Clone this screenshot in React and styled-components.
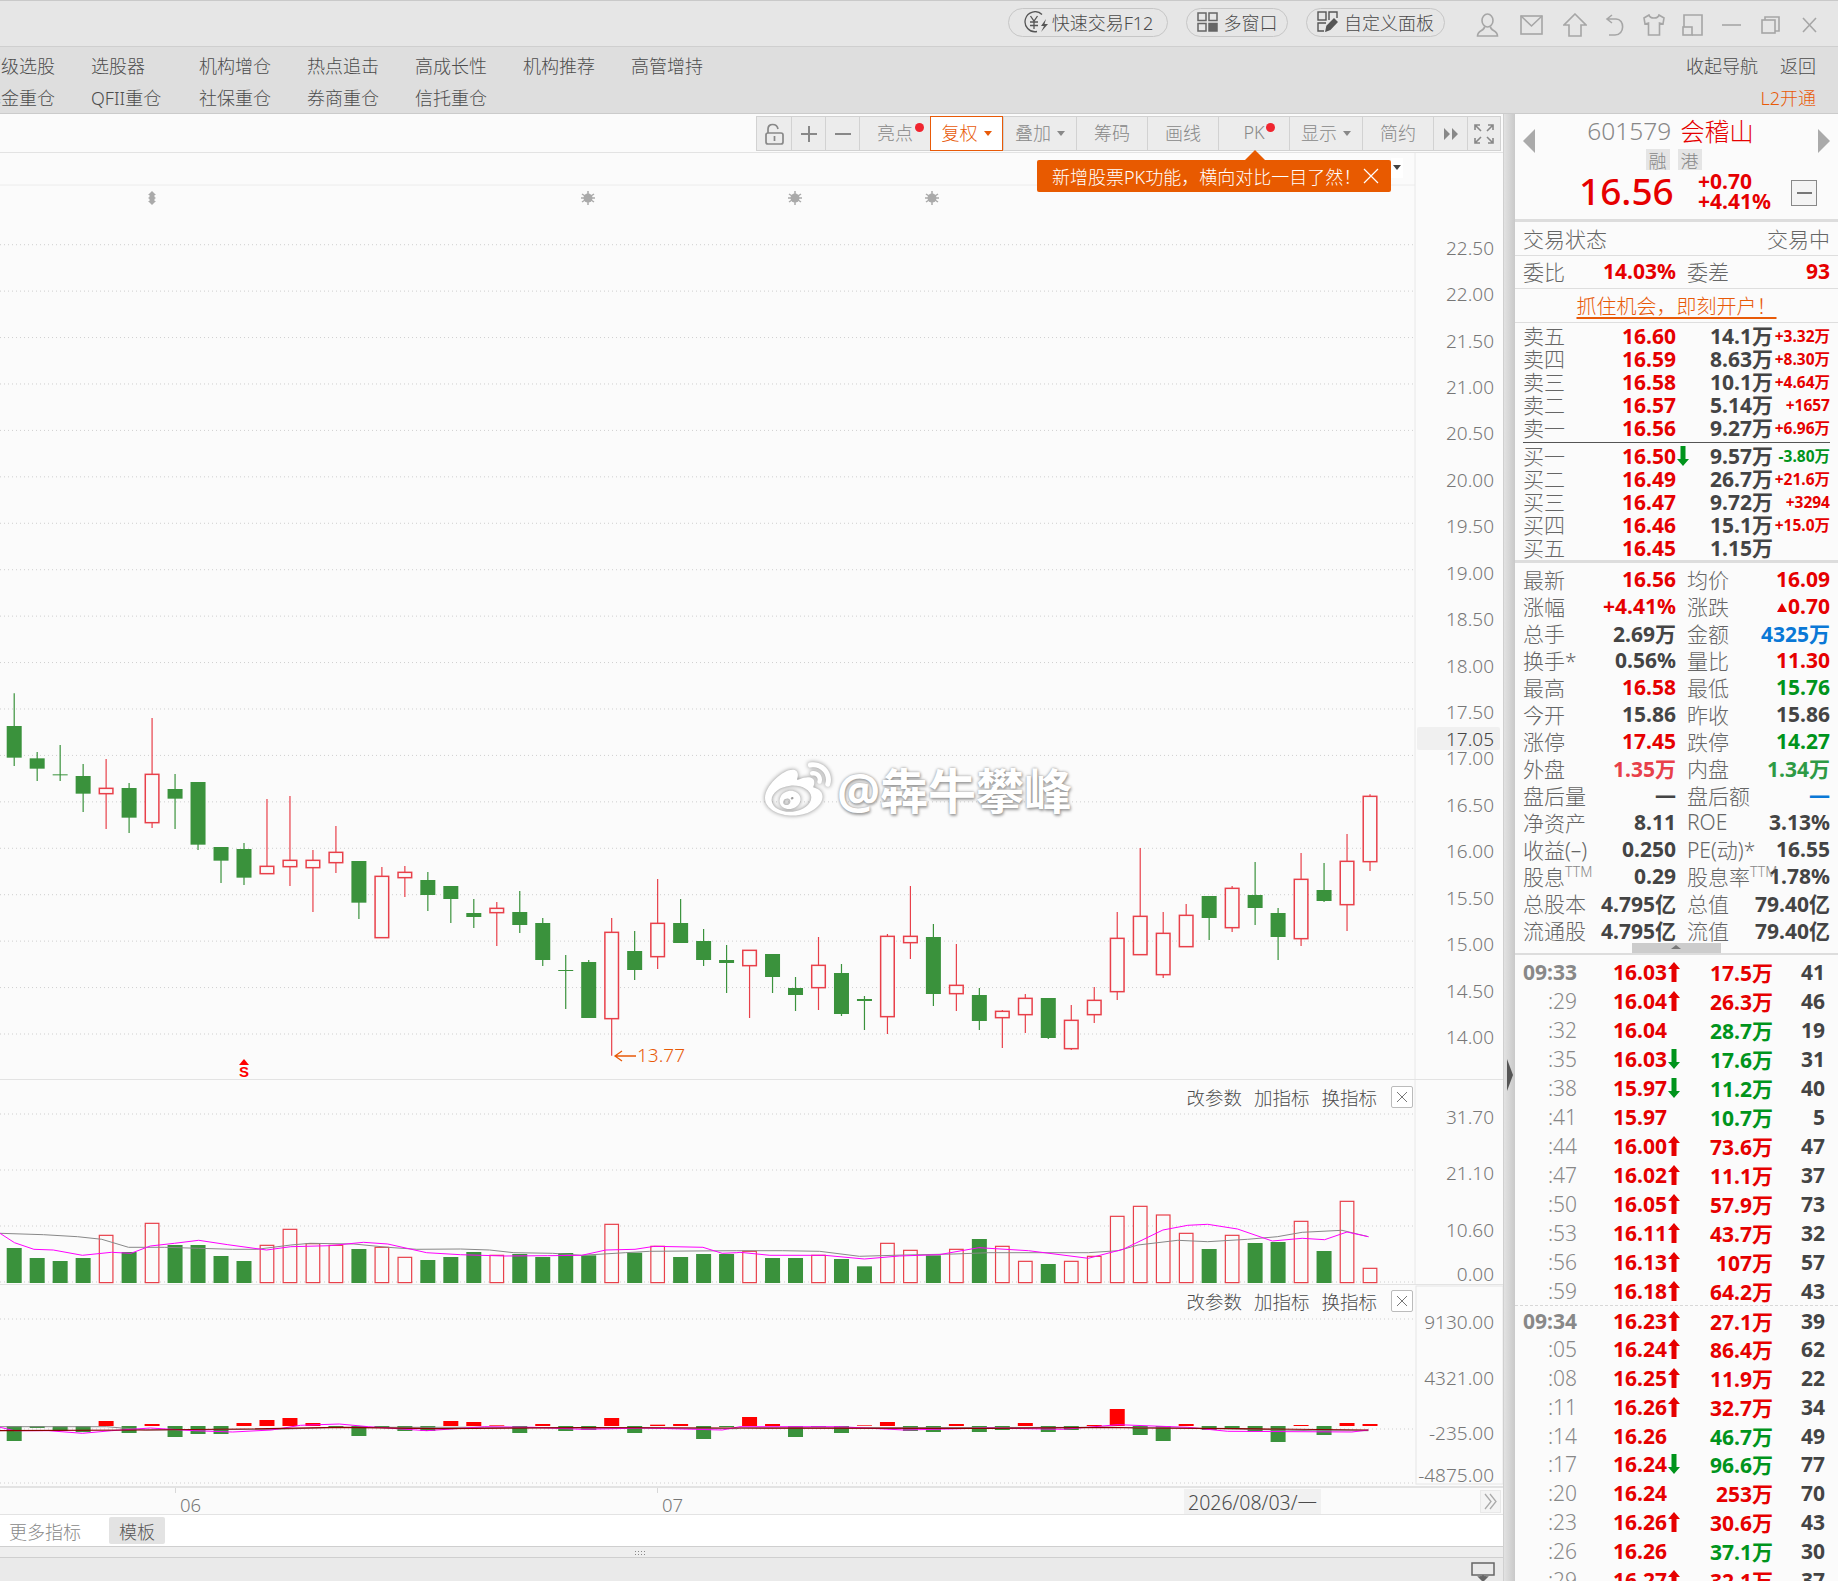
import React from "react";
import styled, { createGlobalStyle } from "styled-components";
import { FaWeibo } from "react-icons/fa";

const FONT = `"Noto Sans", "Noto Sans CJK SC", sans-serif`;
const RED = "#e60000";
const GREEN = "#00941c";
const BLUE = "#0a78d6";
const ORANGE = "#e85a08";
const DARK = "#444";
const CANDLE_RED = "#e8404a";
const CANDLE_GREEN = "#3a923c";

const GlobalStyle = createGlobalStyle`
  html, body { margin: 0; padding: 0; background: #fbfbfb; }
  * { box-sizing: border-box; }
`;

const Page = styled.div`
  width: 1838px;
  height: 1581px;
  overflow: hidden;
  font-family: ${FONT};
  background: #fbfbfb;
  display: flex;
  flex-direction: column;
`;

/* top bars */
const TopBar = styled.div`
  height: 47px;
  flex: none;
  background: #e6e6e6;
  border-top: 1px solid #c9c9c9;
  border-bottom: 1px solid #cfcfcf;
  display: flex;
  align-items: center;
  justify-content: flex-end;
  padding: 0 21px 2px 0;
`;

const Pill = styled.div`
  width: ${(p) => p.$w}px;
  height: 29px;
  margin-right: ${(p) => p.$mr}px;
  padding-bottom: 2px;
  border: 1px solid #c6c6c6;
  border-radius: 15px;
  display: flex;
  align-items: center;
  justify-content: center;
  gap: ${(p) => p.$gap || 6}px;
  color: #4a4a4a;
  font-size: 18px;
  font-weight: 300;
  white-space: nowrap;
`;

const TopIcon = styled.svg`
  display: block;
  flex: none;
  margin-left: ${(p) => p.$ml}px;
  margin-top: 4px;
  fill: none;
  stroke: #a6a6a6;
  stroke-width: 1.6;
`;

const MenuBar = styled.div`
  height: 67px;
  flex: none;
  background: #dedede;
  border-bottom: 1px solid #cbcbcb;
  display: flex;
  justify-content: space-between;
  overflow: hidden;
  padding-top: 2px;
`;

const MenuGrid = styled.div`
  margin-left: -17px;
  display: grid;
  grid-template-columns: repeat(7, 108px);
  grid-auto-rows: 32px;
  align-items: center;
  font-size: 18px;
  font-weight: 300;
  color: #4c4c4c;
`;

const MenuRight = styled.div`
  display: grid;
  grid-auto-rows: 32px;
  align-items: center;
  justify-items: end;
  padding-right: 22px;
  font-size: 18px;
  font-weight: 300;
  color: #4c4c4c;
`;

const MenuLinks = styled.div`
  display: flex;
  gap: 22px;
`;

const OpenLink = styled.div`
  color: ${ORANGE};
`;

/* main area */
const Main = styled.div`
  flex: 1;
  min-height: 0;
  display: flex;
`;

const ChartColumn = styled.div`
  width: 1503px;
  flex: none;
  position: relative;
  display: flex;
  flex-direction: column;
`;

const Splitter = styled.div`
  width: 12px;
  flex: none;
  position: relative;
  background: linear-gradient(90deg, #e2e2e2, #c9c9c9);
  border-left: 1px solid #d0d0d0;
`;

const SplitterArrow = styled.div`
  position: absolute;
  left: 3px;
  top: 945px;
  width: 0;
  height: 0;
  border-top: 16px solid transparent;
  border-bottom: 16px solid transparent;
  border-left: 6px solid #555;
`;

const ToolbarRow = styled.div`
  height: 39px;
  flex: none;
  border-bottom: 1px solid #e3e3e3;
  display: flex;
  justify-content: flex-end;
  padding: 2px 2px 0 0;
`;

const Toolbar = styled.div`
  height: 35px;
  display: flex;
  border: 1px solid #d2d2d2;
  background: #ececec;
`;

const ToolButton = styled.div`
  position: relative;
  width: ${(p) => p.$w}px;
  margin: ${(p) => (p.$active ? "-1px 0" : "0")};
  padding-bottom: ${(p) => (p.$icon ? 0 : 3)}px;
  border-left: ${(p) => (p.$first ? "none" : "1.5px solid #d2d2d2")};
  display: flex;
  align-items: center;
  justify-content: center;
  gap: 6px;
  font-size: 18px;
  font-weight: 300;
  color: #888;
  ${(p) =>
    p.$active &&
    `border: 1px solid ${ORANGE}; background: #fff; color: ${ORANGE}; z-index: 1;`}
`;

const RedDot = styled.span`
  position: absolute;
  top: 6px;
  right: ${(p) => p.$right}px;
  width: 9px;
  height: 9px;
  border-radius: 50%;
  background: #f0252f;
`;

const Caret = styled.span`
  width: 0;
  height: 0;
  margin-top: 3px;
  border-left: 4px solid transparent;
  border-right: 4px solid transparent;
  border-top: 5px solid ${(p) => p.$color || "#888"};
`;

const ToolIcon = styled.svg`
  display: block;
  fill: none;
  stroke: #888;
  stroke-width: ${(p) => p.$sw || 1.6};
`;

const Tip = styled.div`
  position: absolute;
  left: 1037px;
  top: 46px;
  width: 354px;
  height: 32px;
  z-index: 3;
  background: #e85a00;
  border-radius: 2px;
  color: #fff;
  font-size: 18px;
  font-weight: 300;
  display: flex;
  align-items: center;
  gap: 2px;
  padding-left: 15px;
  white-space: nowrap;

  &::before {
    content: "";
    position: absolute;
    left: 208px;
    top: -10px;
    border-left: 10px solid transparent;
    border-right: 10px solid transparent;
    border-bottom: 10px solid #e85a00;
  }
`;

const ChartPanel = styled.div`
  height: ${(p) => p.$h}px;
  flex: none;
  position: relative;
  border-bottom: 1px solid #e3e3e3;
`;

const ChartSvg = styled.svg`
  display: block;
`;

const AxisText = styled.text`
  font-family: ${FONT};
  font-size: 19px;
  font-weight: 300;
  fill: ${(p) => p.$color || "#777"};
  text-anchor: ${(p) => p.$anchor || "end"};
`;

const PanelTools = styled.div`
  position: absolute;
  right: 90px;
  top: ${(p) => p.$top}px;
  display: flex;
  align-items: center;
  gap: 12px;
  font-size: 18.5px;
  font-weight: 300;
  color: #4c4c4c;
  height: 22px;
`;

const CloseBox = styled.div`
  width: 22px;
  height: 22px;
  border: 1px solid #bbb;
  border-radius: 2px;
  background: #fff;
  display: flex;
  align-items: center;
  justify-content: center;
  margin-left: 2px;
`;

const Watermark = styled.div`
  position: absolute;
  left: 765px;
  top: 605px;
  display: flex;
  align-items: center;
  gap: 6px;
  color: #fff;
  font-size: 48px;
  font-weight: 700;
  line-height: 56px;
  white-space: nowrap;
  text-shadow: 0 0 3px #8a8a8a, 1px 2px 3px #aaa;

  svg {
    filter: drop-shadow(0 0 2px #888);
  }
`;

const DateBar = styled.div`
  height: 28px;
  flex: none;
  position: relative;
  border-top: 1px solid #e3e3e3;
  border-bottom: 1px solid #e3e3e3;
  font-size: 18.5px;
  font-weight: 300;
  color: #777;
`;

const MonthTick = styled.div`
  position: absolute;
  left: ${(p) => p.$x}px;
  top: 0;
  height: 26px;
  line-height: 34px;
  padding-left: 5px;
  white-space: nowrap;

  &::before {
    content: "";
    position: absolute;
    left: 0;
    top: 0;
    height: 5px;
    border-left: 1px solid #d8d8d8;
  }
`;

const DateTag = styled.div`
  position: absolute;
  left: 1184px;
  top: 1px;
  width: 137px;
  height: 25px;
  background: #f1f1f1;
  color: #4a4a4a;
  font-size: 19.5px;
  display: flex;
  align-items: center;
  justify-content: center;
  white-space: nowrap;
`;

const MoreButton = styled.div`
  position: absolute;
  left: 1480px;
  top: 2px;
  width: 21px;
  height: 23px;
  background: #f4f4f4;
  border: 1px solid #e8e8e8;
  display: flex;
  align-items: center;
  justify-content: center;
`;

const TemplateBar = styled.div`
  height: 32px;
  flex: none;
  background: #fff;
  border-bottom: 1px solid #cfcfcf;
  display: flex;
  align-items: center;
  padding-left: 9px;
  font-size: 18px;
  font-weight: 300;
  color: #888;
`;

const TemplateTag = styled.div`
  margin-left: 28px;
  width: 56px;
  height: 27px;
  background: #e3e3e3;
  border-radius: 2px;
  color: #555;
  display: flex;
  align-items: center;
  justify-content: center;
`;

const Strip = styled.div`
  height: 11px;
  flex: none;
  background: #eeeeee;
  border-bottom: 1px solid #cfcfcf;
  display: flex;
  justify-content: center;
  padding: 3px 222px 0 0;
`;

const Grip = styled.div`
  width: 13px;
  height: 6px;
  background-image: radial-gradient(#888 0.9px, transparent 1px);
  background-size: 3px 3px;
`;

const StatusBar = styled.div`
  flex: 1;
  background: #eaeaea;
  display: flex;
  justify-content: flex-end;
  padding: 4px 8px 0 0;
`;

/* quote panel */
const QuotePanel = styled.div`
  width: 323px;
  flex: none;
  background: #fbfbfb;
  overflow: hidden;
  color: #666;
  font-size: 21px;
`;

const PanelHead = styled.div`
  height: 108px;
  border-bottom: 3px solid #dddddd;
`;

const NavRow = styled.div`
  height: 35px;
  display: flex;
  justify-content: space-between;
  padding: 0 8px;
`;

const NavArrow = styled.div`
  width: 0;
  height: 0;
  margin-top: 15px;
  border-top: 12px solid transparent;
  border-bottom: 12px solid transparent;
  ${(p) =>
    p.$right ? "border-left: 12px solid #aaa;" : "border-right: 12px solid #aaa;"}
`;

const Title = styled.div`
  margin-right: 12px;
  padding-bottom: 2px;
  display: flex;
  align-items: center;
  gap: 9px;
  font-size: 24.5px;
  font-weight: 300;
  color: #888;
  white-space: nowrap;
`;

const TitleName = styled.span`
  color: ${RED};
`;

const BadgeRow = styled.div`
  height: 22px;
  display: flex;
  justify-content: center;
  gap: 8px;
  padding-right: 6px;
`;

const Badge = styled.div`
  width: 24px;
  height: 21px;
  background: #e5e5e5;
  color: #888;
  font-size: 18px;
  font-weight: 300;
  display: flex;
  align-items: center;
  justify-content: center;
`;

const QuoteRow = styled.div`
  display: flex;
  padding-left: 64px;
`;

const BigPrice = styled.div`
  width: 119px;
  line-height: 40px;
  font-size: 37px;
  font-weight: 500;
  color: ${RED};
`;

const ChangeBox = styled.div`
  margin-top: 0;
  font-size: 21px;
  font-weight: 700;
  line-height: 20px;
  color: ${RED};
`;

const MinusBox = styled.div`
  margin: 9px 21px 0 auto;
  width: 26px;
  height: 26px;
  border: 1.5px solid #888;
  background: #f4f4f4;
  display: flex;
  align-items: center;
  justify-content: center;
  &::after {
    content: "";
    width: 15px;
    height: 2px;
    background: #777;
  }
`;

const Line = styled.div`
  height: ${(p) => p.$h}px;
  border-bottom: 1px solid #dedede;
  display: flex;
  align-items: center;
  justify-content: ${(p) => p.$justify || "space-between"};
  padding: 0 8px ${(p) => p.$pb ?? 2}px;
  font-weight: 300;
`;

const CommitCell = styled.div`
  display: grid;
  width: 100%;
  grid-template-columns: 60px 93px 11px 60px 1fr;
  align-items: center;
`;

const Val = styled.span`
  font-weight: 700;
  text-align: right;
  white-space: nowrap;
  color: ${(p) => p.$color || DARK};
`;

const Promo = styled.span`
  color: ${ORANGE};
  font-size: 20px;
  text-decoration: underline;
  text-underline-offset: 3px;
`;

const OrderBook = styled.div`
  padding-top: 1.5px;
`;

const OrderRow = styled.div`
  height: 23px;
  margin: 0 8px;
  display: grid;
  grid-template-columns: 60px 93px 13px 84px 57px;
  align-items: center;
  line-height: 23px;
`;

const Thin = styled.span`
  font-weight: 300;
  white-space: nowrap;
`;

const Delta = styled.span`
  font-size: 15.5px;
  font-weight: 700;
  text-align: right;
  white-space: nowrap;
  color: ${(p) => p.$color};
`;

const BookDivider = styled.div`
  height: 3px;
  margin: 0 8px 2px;
  border-bottom: 1px solid #555;
`;

const StatsBlock = styled.div`
  height: 383.5px;
  border-top: 3px solid #dddddd;
  padding-top: 1.5px;
`;

const StatRow = styled.div`
  height: 27px;
  margin: 0 8px;
  display: grid;
  grid-template-columns: 60px 93px 11px 60px 1fr;
  align-items: center;
`;

const Sup = styled.sup`
  font-size: 14px;
  line-height: 0;
  color: #888;
`;

const UpMark = styled.span`
  display: inline-block;
  width: 0;
  height: 0;
  margin-right: 1px;
  vertical-align: 2px;
  border-left: 5px solid transparent;
  border-right: 5px solid transparent;
  border-bottom: 9px solid ${RED};
`;

const Handle = styled.div`
  position: relative;
  width: 89px;
  height: 10px;
  margin: 0 auto;
  background: #cccccc;
  &::after {
    content: "";
    position: absolute;
    left: 39px;
    top: 2px;
    border-left: 5px solid transparent;
    border-right: 5px solid transparent;
    border-bottom: 4px solid #777;
  }
`;

const TickList = styled.div`
  border-top: 2px solid #dddddd;
  padding-top: 2px;
`;

const TickRow = styled.div`
  height: 28.97px;
  margin-left: ${(p) => (p.$dash ? 0 : 8)}px;
  padding-left: ${(p) => (p.$dash ? 8 : 0)}px;
  border-top: ${(p) => (p.$dash ? "1px dashed #d8d8d8" : "none")};
  display: grid;
  grid-template-columns: 54px 90px 13px 93px 52px;
  align-items: center;
`;

const TickTime = styled.span`
  text-align: ${(p) => (p.$head ? "left" : "right")};
  font-weight: ${(p) => (p.$head ? 700 : 300)};
  color: #888;
`;

const ArrowSvg = styled.svg`
  display: block;
  justify-self: end;
`;

const Arrow = ({ dir }) => (
  <ArrowSvg width="12" height="20" viewBox="0 0 12 20" fill={dir === "up" ? RED : GREEN}>
    {dir === "up" ? (
      <path d="M6 0 L12 7 H8.5 V20 H3.5 V7 H0 Z" />
    ) : (
      <path d="M3.5 0 H8.5 V13 H12 L6 20 L0 13 H3.5 Z" />
    )}
  </ArrowSvg>
);

/* chart data: values are taken in 3x crop rows, y = 680 + v / 3 */
const CANDLES = [
  [40, 138, 233, 258, "g"], [216, 235, 266, 303, "g"], [195, 283, 285, 303, "g"], [252, 288, 341, 396, "g"],
  [237, 325, 341, 447, "r"], [309, 324, 413, 459, "g"], [114, 283, 428, 444, "r"], [282, 327, 356, 447, "g"],
  [306, 306, 494, 510, "g"], [501, 501, 542, 609, "g"], [489, 507, 593, 615, "g"], [357, 559, 581, 581, "r"],
  [348, 541, 560, 618, "r"], [510, 541, 563, 696, "r"], [438, 517, 548, 579, "r"], [543, 543, 668, 717, "g"],
  [561, 589, 773, 773, "r"], [558, 577, 593, 651, "r"], [576, 600, 645, 693, "g"], [618, 618, 657, 729, "g"],
  [657, 699, 711, 744, "g"], [666, 685, 698, 798, "r"], [633, 696, 735, 759, "g"], [714, 729, 840, 858, "g"],
  [825, 870, 873, 987, "g"], [840, 846, 1014, 1014, "g"], [714, 757, 1016, 1127, "r"], [753, 813, 870, 900, "g"],
  [597, 730, 830, 867, "r"], [657, 729, 789, 789, "g"], [747, 783, 840, 858, "g"], [795, 840, 849, 939, "g"],
  [811, 811, 857, 1014, "r"], [822, 822, 891, 939, "g"], [891, 924, 945, 993, "g"], [771, 856, 923, 990, "r"],
  [852, 879, 1002, 1008, "g"], [948, 957, 963, 1050, "g"], [762, 769, 1010, 1062, "r"], [618, 769, 788, 837, "r"],
  [732, 771, 942, 978, "g"], [792, 916, 941, 993, "r"], [924, 945, 1023, 1050, "g"], [990, 994, 1013, 1104, "r"],
  [942, 955, 1004, 1059, "r"], [954, 954, 1074, 1077, "g"], [975, 1021, 1106, 1110, "r"], [921, 961, 1004, 1029, "r"],
  [696, 775, 935, 960, "r"], [504, 709, 824, 824, "r"], [696, 760, 884, 894, "r"], [672, 706, 800, 800, "r"],
  [648, 648, 714, 780, "g"], [618, 625, 743, 756, "r"], [546, 645, 684, 735, "g"], [684, 699, 771, 840, "g"],
  [519, 598, 776, 798, "r"], [549, 630, 663, 666, "g"], [462, 544, 674, 753, "r"], [343, 349, 545, 573, "r"],
];

const VOLUME = [
  504, 534, 543, 534, 466, 516, 430, 495, 495, 528, 543, 496, 448, 491, 496, 507, 502, 532, 540, 531,
  516, 526, 522, 531, 519, 526, 433, 518, 499, 531, 522, 522, 514, 534, 534, 526, 537, 559, 490, 511,
  526, 508, 477, 499, 544, 552, 544, 529, 409, 379, 405, 460, 507, 466, 489, 486, 424, 513, 364, 565,
];

const MACD = [
  1083, 1044, 1053, 1056, 1023, 1059, 1032, 1071, 1062, 1062, 1029, 1020, 1014, 1029, 1044, 1068, 1044, 1053, 1053, 1023,
  1026, 1036, 1059, 1032, 1053, 1050, 1014, 1059, 1034, 1032, 1077, 1041, 1011, 1032, 1071, 1041, 1059, 1036, 1026, 1053,
  1056, 1032, 1056, 1050, 1029, 1056, 1050, 1035, 987, 1065, 1083, 1032, 1050, 1044, 1056, 1086, 1035, 1065, 1029, 1032,
];

const VOL_GRAY = [
  [0, 460], [90, 464], [160, 470], [210, 478], [265, 502], [340, 502], [410, 505], [480, 508], [530, 508], [600, 495],
  [640, 490], [730, 492], [800, 502], [860, 508], [950, 507], [1010, 510], [1060, 518], [1140, 520], [1200, 526],
  [1290, 518], [1340, 514], [1520, 512],
];
const VOL_GRAY2 = [
  [0, 512], [85, 512], [160, 514], [240, 529], [330, 525], [430, 522], [500, 518], [700, 518], [760, 512], [800, 495],
  [880, 481], [940, 485], [1020, 478], [1080, 470], [1130, 457], [1210, 451], [1263, 470],
];
const VOL_PINK = [
  [0, 460], [30, 488], [70, 508], [110, 510], [170, 526], [230, 517], [270, 520], [310, 498], [360, 490], [410, 481],
  [470, 494], [550, 510], [600, 500], [680, 497], [750, 487], [800, 492], [880, 518], [950, 524], [1040, 528],
  [1130, 527], [1200, 526], [1250, 510], [1310, 508], [1350, 499], [1450, 502], [1490, 520], [1520, 518],
];
const VOL_PINK2 = [
  [0, 517], [60, 526], [170, 526], [250, 537], [320, 528], [400, 524], [480, 503], [580, 512], [700, 535], [770, 508],
  [850, 450], [900, 436], [940, 433], [1000, 447], [1070, 483], [1130, 475], [1175, 479], [1220, 456], [1263, 470],
];
const MACD_RED = [[0, 1052], [300, 1050], [500, 1047], [700, 1042], [900, 1046], [1200, 1043], [1520, 1044]];
const MACD_RED2 = [[0, 1044], [500, 1045], [740, 1042], [800, 1044], [1000, 1046], [1263, 1050]];
const MACD_PINK = [
  [0, 1042], [30, 1052], [100, 1052], [170, 1060], [230, 1052], [310, 1044], [400, 1052], [480, 1056], [560, 1050],
  [620, 1036], [700, 1032], [760, 1040], [880, 1052], [1000, 1040], [1100, 1042], [1200, 1048], [1330, 1044], [1490, 1050],
];
const MACD_PINK2 = [
  [0, 1040], [80, 1040], [200, 1040], [330, 1050], [500, 1044], [650, 1048], [760, 1034], [900, 1042], [980, 1054],
  [1230, 1056], [1263, 1050],
];
const MACD_GRAY = [[0, 1040], [220, 1040], [300, 1050], [570, 1048], [700, 1042], [1000, 1042], [1520, 1046]];
const MACD_GRAY2 = [[0, 1044], [730, 1042], [900, 1044], [1150, 1052], [1263, 1052]];

const cx = (i) => 14.2 + 22.98 * i;
const mainY = (v) => 680 + v / 3;
const lowerY = (v) => 1080 + v / 3;
const priceY = (p) => 1034 - (p - 14) * 92.86;

const joinLine = (a, b) =>
  [...a.map(([x, v]) => [x / 2.063, v]), ...b.map(([x, v]) => [740 + x / 2.01, v])]
    .map(([x, v]) => `${x.toFixed(1)},${lowerY(v).toFixed(1)}`)
    .join(" ");

const PRICES = Array.from({ length: 18 }, (_, i) => 14 + i * 0.5);

const MenuRow1 = ["高级选股", "选股器", "机构增仓", "热点追击", "高成长性", "机构推荐", "高管增持"];
const MenuRow2 = ["基金重仓", "QFII重仓", "社保重仓", "券商重仓", "信托重仓"];

const Candle = ({ c, i }) => {
  const [hi, top, bot, lo, col] = c;
  const x = cx(i);
  const color = col === "r" ? CANDLE_RED : CANDLE_GREEN;
  return (
    <g>
      <line x1={x} x2={x} y1={mainY(hi)} y2={mainY(lo)} stroke={color} strokeWidth="1.2" />
      {col === "r" ? (
        <rect x={x - 6.8} width="13.6" y={mainY(top)} height={(bot - top) / 3} fill="#fbfbfb" stroke={color} strokeWidth="1.5" />
      ) : (
        <rect x={x - 7.5} width="15" y={mainY(top)} height={Math.max((bot - top) / 3, 1)} fill={color} />
      )}
    </g>
  );
};

const GridLines = ({ ys }) =>
  ys.map((y) => (
    <line key={y} x1="0" x2="1415" y1={y} y2={y} stroke="#cfcfcf" strokeDasharray="1 3" />
  ));

const Mark = ({ x, tall }) => (
  <g stroke="#aaa" fill="#aaa">
    {tall ? (
      <path d={`M${x} 191 l-4 4 h1.5 v2 l-1.5 1 l1.5 1 v2 h-1.5 l4 4 l4 -4 h-1.5 v-2 l1.5 -1 l-1.5 -1 v-2 h1.5 Z`} stroke="none" />
    ) : (
      <>
        <circle cx={x} cy="198" r="4.5" stroke="none" />
        <path d={`M${x} 191 V205 M${x - 6} 194 L${x + 6} 202 M${x + 6} 194 L${x - 6} 202 M${x - 7} 198 H${x + 7}`} strokeWidth="1.5" />
      </>
    )}
  </g>
);

const PanelToolset = ({ top }) => (
  <PanelTools $top={top}>
    <span>改参数</span>
    <span>加指标</span>
    <span>换指标</span>
    <CloseBox>
      <svg width="12" height="12" viewBox="0 0 12 12" stroke="#777" fill="none">
        <path d="M1 1 L11 11 M11 1 L1 11" />
      </svg>
    </CloseBox>
  </PanelTools>
);

const ASKS = [
  ["卖五", "16.60", "14.1", "+3.32万"],
  ["卖四", "16.59", "8.63", "+8.30万"],
  ["卖三", "16.58", "10.1", "+4.64万"],
  ["卖二", "16.57", "5.14", "+1657"],
  ["卖一", "16.56", "9.27", "+6.96万"],
];
const BIDS = [
  ["买一", "16.50", "9.57", "-3.80万", "dn"],
  ["买二", "16.49", "26.7", "+21.6万"],
  ["买三", "16.47", "9.72", "+3294"],
  ["买四", "16.46", "15.1", "+15.0万"],
  ["买五", "16.45", "1.15", ""],
];

const STATS = [
  ["最新", "16.56", RED, "均价", "16.09", RED],
  ["涨幅", "+4.41%", RED, "涨跌", "^0.70", RED],
  ["总手", "2.69万", DARK, "金额", "4325万", BLUE],
  ["换手*", "0.56%", DARK, "量比", "11.30", RED],
  ["最高", "16.58", RED, "最低", "15.76", GREEN],
  ["今开", "15.86", DARK, "昨收", "15.86", DARK],
  ["涨停", "17.45", RED, "跌停", "14.27", GREEN],
  ["外盘", "1.35万", "#e8404a", "内盘", "1.34万", "#2e9a45"],
  ["盘后量", "—", DARK, "盘后额", "—", BLUE],
  ["净资产", "8.11", DARK, "ROE", "3.13%", DARK],
  ["收益(–)", "0.250", DARK, "PE(动)*", "16.55", DARK],
  ["股息|TTM", "0.29", DARK, "股息率|TTM", "1.78%", DARK],
  ["总股本", "4.795亿", DARK, "总值", "79.40亿", DARK],
  ["流通股", "4.795亿", DARK, "流值", "79.40亿", DARK],
];

const TICKS = [
  ["09:33", "16.03", "up", "17.5", "r", 41],
  [":29", "16.04", "up", "26.3", "r", 46],
  [":32", "16.04", "", "28.7", "g", 19],
  [":35", "16.03", "dn", "17.6", "g", 31],
  [":38", "15.97", "dn", "11.2", "g", 40],
  [":41", "15.97", "", "10.7", "g", 5],
  [":44", "16.00", "up", "73.6", "r", 47],
  [":47", "16.02", "up", "11.1", "r", 37],
  [":50", "16.05", "up", "57.9", "r", 73],
  [":53", "16.11", "up", "43.7", "r", 32],
  [":56", "16.13", "up", "107", "r", 57],
  [":59", "16.18", "up", "64.2", "r", 43],
  ["09:34", "16.23", "up", "27.1", "r", 39],
  [":05", "16.24", "up", "86.4", "r", 62],
  [":08", "16.25", "up", "11.9", "r", 22],
  [":11", "16.26", "up", "32.7", "r", 34],
  [":14", "16.26", "", "46.7", "g", 49],
  [":17", "16.24", "dn", "96.6", "g", 77],
  [":20", "16.24", "", "253", "r", 70],
  [":23", "16.26", "up", "30.6", "r", 43],
  [":26", "16.26", "", "37.1", "g", 30],
  [":29", "16.27", "up", "32.1", "r", 37],
];

const Label = ({ text }) => {
  const [name, sup] = text.split("|");
  return (
    <Thin>
      {name}
      {sup && <Sup>{sup}</Sup>}
    </Thin>
  );
};

const StatValue = ({ text, color }) => (
  <Val $color={color}>
    {text.startsWith("^") ? (
      <>
        <UpMark />
        {text.slice(1)}
      </>
    ) : (
      text
    )}
  </Val>
);

const OrderLine = ({ row }) => (
  <OrderRow>
    <Thin>{row[0]}</Thin>
    <Val $color={RED}>{row[1]}</Val>
    <span>{row[4] && <Arrow dir={row[4]} />}</span>
    <Val>{row[2]}万</Val>
    <Delta $color={row[3].startsWith("-") ? GREEN : RED}>{row[3]}</Delta>
  </OrderRow>
);

const App = () => {
  return (
    <Page>
      <GlobalStyle />
      <TopBar>
        <Pill $w={160} $mr={18} $gap={3}>
          <svg width="26" height="22" viewBox="0 0 26 22" fill="none" stroke="#555" strokeWidth="1.3">
            <path d="M19 3.5 A10 10 0 1 0 14 20.5" />
            <path d="M7.5 5 L11 10 L14.5 5 M11 10 V18 M7 11 H15 M7 14.5 H15" />
            <path d="M23 8 L18 15 H21 L18 21 L25 13 H21.5 Z" fill="#555" stroke="none" />
          </svg>
          快速交易F12
        </Pill>
        <Pill $w={102} $mr={18}>
          <svg width="21" height="20" viewBox="0 0 21 20" fill="none" stroke="#666" strokeWidth="1.5">
            <rect x="1" y="1" width="8" height="7.5" />
            <rect x="12" y="1" width="8" height="7.5" />
            <rect x="1" y="11.5" width="8" height="7.5" />
            <rect x="12" y="11.5" width="8" height="7.5" fill="#666" />
          </svg>
          多窗口
        </Pill>
        <Pill $w={139} $mr={31}>
          <svg width="21" height="21" viewBox="0 0 21 21" fill="none" stroke="#555" strokeWidth="1.4">
            <rect x="1" y="1" width="8" height="8" />
            <path d="M12 9 V1 H20 V7" />
            <path d="M9 12 H1 V20 H7" />
            <path d="M9 20 L10 15 L17 8 L20 11 L13 18.5 Z" fill="#555" />
          </svg>
          自定义面板
        </Pill>
        <TopIcon width="23" height="24" viewBox="0 0 23 24">
          <ellipse cx="11.5" cy="7.5" rx="5.5" ry="6.5" />
          <path d="M8.5 13.5 C9 18 1.5 17 1.5 23 H21.5 C21.5 17 14 18 14.5 13.5" />
        </TopIcon>
        <TopIcon $ml={21} width="23" height="20" viewBox="0 0 23 20">
          <rect x="1" y="1" width="21" height="18" />
          <path d="M1 1 L11.5 11 L22 1" />
        </TopIcon>
        <TopIcon $ml={20} width="24" height="24" viewBox="0 0 24 24">
          <path d="M12 1 L23 12 H18 V23 H6 V12 H1 Z" />
        </TopIcon>
        <TopIcon $ml={18} width="19" height="22" viewBox="0 0 19 22">
          <path d="M7 1 L2 5 L7 9 M2 5 H11 C20 5 20 21 10 21 H4" />
        </TopIcon>
        <TopIcon $ml={18} width="24" height="22" viewBox="0 0 24 22">
          <path d="M7 1 L2 4 L3 10 L6.5 9 V21 H17.5 V9 L21 10 L22 4 L17 1 C16 5 8 5 7 1 Z" />
        </TopIcon>
        <TopIcon $ml={16} width="21" height="22" viewBox="0 0 21 22">
          <path d="M2 13 V1 H20 V21 H10" />
          <rect x="1" y="13" width="9" height="8" />
        </TopIcon>
        <TopIcon $ml={19} width="19" height="24" viewBox="0 0 19 24">
          <path d="M0 12 H19" />
        </TopIcon>
        <TopIcon $ml={20} width="20" height="18" viewBox="0 0 20 18">
          <path d="M4 4 V1 H18 V15 H14" />
          <rect x="1" y="4" width="13" height="13" />
        </TopIcon>
        <TopIcon $ml={21} width="15" height="16" viewBox="0 0 15 16">
          <path d="M1 1 L14 15 M14 1 L1 15" />
        </TopIcon>
      </TopBar>

      <MenuBar>
        <MenuGrid>
          {MenuRow1.map((m) => (
            <span key={m}>{m}</span>
          ))}
          {MenuRow2.map((m) => (
            <span key={m}>{m}</span>
          ))}
        </MenuGrid>
        <MenuRight>
          <MenuLinks>
            <span>收起导航</span>
            <span>返回</span>
          </MenuLinks>
          <OpenLink>L2开通</OpenLink>
        </MenuRight>
      </MenuBar>

      <Main>
        <ChartColumn>
          <ToolbarRow>
            <Toolbar>
              <ToolButton $w={34} $first $icon>
                <ToolIcon width="19" height="22" viewBox="0 0 19 22" $sw={1.7}>
                  <path d="M3 10 V6 C3 0 12 0 13 6" />
                  <rect x="1" y="10" width="17" height="11" rx="2" />
                  <path d="M9.5 13 V18" />
                </ToolIcon>
              </ToolButton>
              <ToolButton $w={34} $icon>
                <ToolIcon width="18" height="18" viewBox="0 0 18 18" $sw={2}>
                  <path d="M1 9 H17 M9 1 V17" />
                </ToolIcon>
              </ToolButton>
              <ToolButton $w={34} $icon>
                <ToolIcon width="18" height="18" viewBox="0 0 18 18" $sw={2}>
                  <path d="M1 9 H17" />
                </ToolIcon>
              </ToolButton>
              <ToolButton $w={71}>
                亮点
                <RedDot $right={6} />
              </ToolButton>
              <ToolButton $w={73} $active>
                复权
                <Caret $color={ORANGE} />
              </ToolButton>
              <ToolButton $w={73}>
                叠加
                <Caret />
              </ToolButton>
              <ToolButton $w={71}>筹码</ToolButton>
              <ToolButton $w={71}>画线</ToolButton>
              <ToolButton $w={71}>
                PK
                <RedDot $right={14} />
              </ToolButton>
              <ToolButton $w={73}>
                显示
                <Caret />
              </ToolButton>
              <ToolButton $w={71}>简约</ToolButton>
              <ToolButton $w={34} $icon>
                <svg width="16" height="12" viewBox="0 0 16 12" fill="#888">
                  <path d="M1 0 L7 6 L1 12 Z M9 0 L15 6 L9 12 Z" />
                </svg>
              </ToolButton>
              <ToolButton $w={33} $icon>
                <ToolIcon width="22" height="22" viewBox="0 0 22 22">
                  <path d="M2 7 V2 H7 M2 2 L8 8 M15 2 H20 V7 M20 2 L14 8 M2 15 V20 H7 M2 20 L8 14 M15 20 H20 V15 M20 20 L14 14" />
                </ToolIcon>
              </ToolButton>
            </Toolbar>
          </ToolbarRow>

          <Tip>
            新增股票PK功能，横向对比一目了然！
            <svg width="16" height="16" viewBox="0 0 16 16" stroke="#fff" strokeWidth="1.2" fill="none">
              <path d="M1 1 L15 15 M15 1 L1 15" />
            </svg>
          </Tip>

          <ChartPanel $h={927}>
            <ChartSvg width="1503" height="926" viewBox="0 153 1503 926">
              <line x1="0" x2="1415" y1="185" y2="185" stroke="#ececec" />
              <line x1="1415" x2="1415" y1="153" y2="1079" stroke="#e8e8e8" />
              <rect x="1391" y="158" width="12" height="20" fill="#fff" />
              <path d="M1393 165 H1401 L1397 170 Z" fill="#444" />
              <GridLines ys={PRICES.map(priceY)} />
              {PRICES.map((p) => (
                <AxisText key={p} x="1494" y={priceY(p) + 10}>
                  {p.toFixed(2)}
                </AxisText>
              ))}
              <rect x="1417" y="727" width="83" height="23" rx="2" fill="#f0f0f0" />
              <AxisText x="1494" y="746" $color="#444">17.05</AxisText>
              <Mark x={152} tall />
              <Mark x={588} />
              <Mark x={795} />
              <Mark x={932} />
              {CANDLES.map((c, i) => (
                <Candle key={i} c={c} i={i} />
              ))}
              <path d="M636 1056 H615 M622 1051 L615 1056 L622 1061" stroke={ORANGE} strokeWidth="1.3" fill="none" />
              <AxisText x="637" y="1062" $anchor="start" $color={ORANGE}>13.77</AxisText>
              <path d="M244 1059 L249 1065 H239 Z" fill="#f00" />
              <text x="244" y="1077" textAnchor="middle" fontSize="15" fontWeight="700" fontFamily="Liberation Sans" fill="#f00">
                S
              </text>
            </ChartSvg>
            <Watermark>
              <FaWeibo size={66} />
              <span>@犇牛攀峰</span>
            </Watermark>
          </ChartPanel>

          <ChartPanel $h={205}>
            <ChartSvg width="1503" height="204" viewBox="0 1080 1503 204">
              <line x1="1415" x2="1415" y1="1080" y2="1284" stroke="#e8e8e8" />
              <GridLines ys={[1114, 1170, 1226, 1282]} />
              {VOLUME.map((v, i) =>
                CANDLES[i][4] === "r" ? (
                  <rect key={i} x={cx(i) - 6.8} width="13.6" y={lowerY(v)} height={1282.6 - lowerY(v)} fill="#fbfbfb" stroke={CANDLE_RED} strokeWidth="1.2" />
                ) : (
                  <rect key={i} x={cx(i) - 7.5} width="15" y={lowerY(v)} height={1283 - lowerY(v)} fill={CANDLE_GREEN} />
                )
              )}
              <polyline points={joinLine(VOL_GRAY, VOL_GRAY2)} fill="none" stroke="#888" strokeWidth="1" />
              <polyline points={joinLine(VOL_PINK, VOL_PINK2)} fill="none" stroke="#ff00ff" strokeWidth="1" />
              <AxisText x="1494" y="1124">31.70</AxisText>
              <AxisText x="1494" y="1180">21.10</AxisText>
              <AxisText x="1494" y="1237">10.60</AxisText>
              <AxisText x="1494" y="1281">0.00</AxisText>
            </ChartSvg>
            <PanelToolset top={6} />
          </ChartPanel>

          <ChartPanel $h={202}>
            <ChartSvg width="1503" height="201" viewBox="0 1285 1503 201">
              <rect x="1416" y="1286" width="87" height="198" fill="none" stroke="#e6e6e6" />
              <GridLines ys={[1319, 1375, 1429, 1483]} />
              {MACD.map((v, i) => {
                const y = lowerY(v);
                const base = 1426;
                return (
                  <rect
                    key={i}
                    x={cx(i) - 7.5}
                    width="15"
                    y={Math.min(y, base)}
                    height={Math.abs(y - base)}
                    fill={v < 1038 ? "#ff0000" : CANDLE_GREEN}
                  />
                );
              })}
              <polyline points={joinLine(MACD_GRAY, MACD_GRAY2)} fill="none" stroke="#888" strokeWidth="1" />
              <polyline points={joinLine(MACD_PINK, MACD_PINK2)} fill="none" stroke="#ff00ff" strokeWidth="1" />
              <polyline points={joinLine(MACD_RED, MACD_RED2)} fill="none" stroke="#8b0000" strokeWidth="1.2" />
              <AxisText x="1494" y="1329">9130.00</AxisText>
              <AxisText x="1494" y="1385">4321.00</AxisText>
              <AxisText x="1494" y="1440">-235.00</AxisText>
              <AxisText x="1494" y="1482">-4875.00</AxisText>
            </ChartSvg>
            <PanelToolset top={5} />
          </ChartPanel>

          <DateBar>
            <MonthTick $x={175}>06</MonthTick>
            <MonthTick $x={657}>07</MonthTick>
            <DateTag>2026/08/03/一</DateTag>
            <MoreButton>
              <svg width="15" height="17" viewBox="0 0 15 17" fill="none" stroke="#aaa" strokeWidth="1.3">
                <path d="M2 1 L8 8.5 L2 16 M7 1 L13 8.5 L7 16" />
              </svg>
            </MoreButton>
          </DateBar>

          <TemplateBar>
            更多指标
            <TemplateTag>模板</TemplateTag>
          </TemplateBar>

          <Strip>
            <Grip />
          </Strip>

          <StatusBar>
            <svg width="24" height="19" viewBox="0 0 24 19" fill="none" stroke="#666" strokeWidth="1.5">
              <rect x="1" y="1" width="22" height="12" />
              <path d="M9 15 H15 M12 13 V18" />
              <path d="M8 15 L12 19 L16 15 Z" fill="#666" />
            </svg>
          </StatusBar>
        </ChartColumn>

        <Splitter>
          <SplitterArrow />
        </Splitter>

        <QuotePanel>
          <PanelHead>
            <NavRow>
              <NavArrow />
              <Title>
                601579
                <TitleName>会稽山</TitleName>
              </Title>
              <NavArrow $right />
            </NavRow>
            <BadgeRow>
              <Badge>融</Badge>
              <Badge>港</Badge>
            </BadgeRow>
            <QuoteRow>
              <BigPrice>16.56</BigPrice>
              <ChangeBox>
                <div>+0.70</div>
                <div>+4.41%</div>
              </ChangeBox>
              <MinusBox />
            </QuoteRow>
          </PanelHead>

          <Line $h={34}>
            <span>交易状态</span>
            <span>交易中</span>
          </Line>
          <Line $h={33}>
            <CommitCell>
              <span>委比</span>
              <Val $color={RED}>14.03%</Val>
              <span />
              <span>委差</span>
              <Val $color={RED}>93</Val>
            </CommitCell>
          </Line>
          <Line $h={34} $justify="center" $pb={0}>
            <Promo>抓住机会，即刻开户！</Promo>
          </Line>

          <OrderBook>
            {ASKS.map((r) => (
              <OrderLine key={r[0]} row={r} />
            ))}
            <BookDivider />
            {BIDS.map((r) => (
              <OrderLine key={r[0]} row={r} />
            ))}
          </OrderBook>

          <StatsBlock>
            {STATS.map((s) => (
              <StatRow key={s[0]}>
                <Label text={s[0]} />
                <StatValue text={s[1]} color={s[2]} />
                <span />
                <Label text={s[3]} />
                <StatValue text={s[4]} color={s[5]} />
              </StatRow>
            ))}
          </StatsBlock>
          <Handle />

          <TickList>
            {TICKS.map((t, i) => (
              <TickRow key={i} $dash={i === 12}>
                <TickTime $head={t[0].length > 3}>{t[0]}</TickTime>
                <Val $color={RED}>{t[1]}</Val>
                <span>{t[2] && <Arrow dir={t[2]} />}</span>
                <Val $color={t[4] === "r" ? RED : GREEN}>{t[3]}万</Val>
                <Val>{t[5]}</Val>
              </TickRow>
            ))}
          </TickList>
        </QuotePanel>
      </Main>
    </Page>
  );
};

export default App;
